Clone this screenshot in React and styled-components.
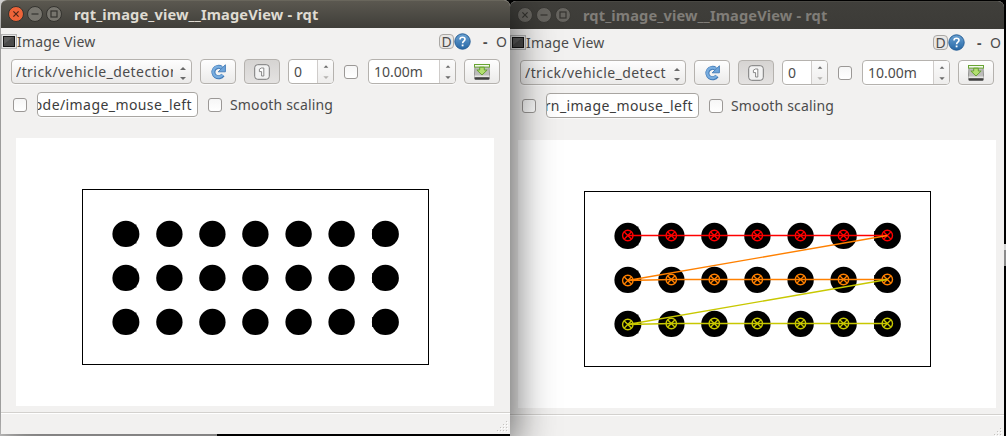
import React from "react";
import styled, { createGlobalStyle } from "styled-components";

const Global = createGlobalStyle`
  body { margin: 0; background: #000; overflow: hidden; }
  * { box-sizing: border-box; }
`;

const Desktop = styled.div`
  position: relative;
  width: 1006px;
  height: 436px;
  overflow: hidden;
  background: #000;
  font-family: "Noto Sans", "Open Sans", sans-serif;
  color: #4c4c4c;
`;

const Backdrop = styled.div`
  position: absolute;
  left: ${(p) => p.$x}px;
  top: ${(p) => p.$y}px;
  width: ${(p) => p.$w}px;
  height: ${(p) => p.$h}px;
  background: ${(p) => p.$bg};
`;

const Frame = styled.section`
  position: absolute;
  left: ${(p) => p.$x}px;
  top: ${(p) => p.$y}px;
  width: ${(p) => p.$w}px;
  height: ${(p) => p.$h}px;
  display: flex;
  flex-direction: column;
  background: #f2f1f0;
  border-radius: 6px 6px 0 0;
  box-shadow: ${(p) => (p.$active ? "0 10px 42px 4px rgba(0,0,0,.62)" : "none")};
`;

const TitleBar = styled.header`
  flex: none;
  height: 28px;
  display: flex;
  align-items: center;
  padding: 0 0 1px 7px;
  border-radius: 6px 6px 0 0;
  background: ${(p) => (p.$active ? "linear-gradient(#5b5850, #3f3e39)" : "linear-gradient(#403f3b, #3c3b37)")};
  border-top: 1px solid ${(p) => (p.$active ? "#69665c" : "#494843")};
`;

const WindowButtons = styled.div`
  display: flex;
  gap: 3px;
`;

const Title = styled.h1`
  margin: 0 0 0 12px;
  font-size: 14.6px;
  font-weight: 700;
  line-height: 26px;
  letter-spacing: 0.14px;
  white-space: nowrap;
  color: ${(p) => (p.$active ? "#dfdbd2" : "#807d78")};
`;

const Header = styled.div`
  flex: none;
  height: 31px;
  display: flex;
  align-items: center;
  padding: 0 2px 4px 0;
`;

const Text = styled.span`
  font-size: 14px;
  line-height: 20px;
  letter-spacing: ${(p) => p.$track || 0}px;
  white-space: nowrap;
`;

const HeaderActions = styled.div`
  margin-left: auto;
  display: flex;
  align-items: center;
`;

const DockButton = styled.span`
  width: 15px;
  height: 15px;
  border: 1px solid #aaa8a5;
  border-radius: 4px;
  background: #e9e7e5;
  font-size: 14px;
  line-height: 14px;
  text-align: center;
`;

const Dash = styled(Text)`
  width: 6px;
  margin-left: 12px;
  font-weight: 700;
`;

const Close = styled(Text)`
  width: 12px;
  margin-left: 7px;
`;

const Toolbar = styled.div`
  flex: none;
  height: 25px;
  display: flex;
  align-items: center;
  gap: 8px;
  padding: 0 10px;
`;

const Control = styled.div`
  height: 25px;
  border: 1px solid #b5b2ae;
  border-radius: 4px;
  box-shadow: 0 1px 0 #fafafa;
`;

const Combo = styled(Control)`
  flex: 1;
  min-width: 0;
  display: flex;
  align-items: center;
  gap: 7px;
  padding: 0 5px 0 4px;
  background: linear-gradient(#fefefe, #ebeae9);
`;

const ComboMark = styled.div`
  padding-top: 4px;
`;

const Clip = styled.div`
  flex: 1;
  min-width: 0;
  overflow: hidden;
  display: flex;
  justify-content: ${(p) => (p.$end ? "flex-end" : "flex-start")};
`;

const ToolButton = styled(Control)`
  width: 36px;
  display: flex;
  align-items: center;
  justify-content: center;
  background: ${(p) => (p.$pressed ? "linear-gradient(#d6d4d2, #e4e2e1)" : "linear-gradient(#fefefe, #ebeae9)")};
`;

const Spin = styled(Control)`
  width: ${(p) => p.$w}px;
  display: flex;
  align-items: center;
  padding-left: 5px;
  background: #fff;
`;

const Stepper = styled.div`
  width: 16px;
  height: 23px;
  margin-left: auto;
  display: flex;
  align-items: center;
  justify-content: center;
  border-left: 1px solid #cfccca;
  border-radius: 0 3px 3px 0;
  background: linear-gradient(#fbfbfb, #eeedec);
`;

const CheckBox = styled.div`
  flex: none;
  width: 14px;
  height: 14px;
  margin: ${(p) => p.$m || "0 2px"};
  border: 1px solid #9b9896;
  border-radius: 3px;
  background: linear-gradient(#f6f6f6, #fff);
`;

const OptionRow = styled.div`
  flex: none;
  height: 25px;
  margin-top: 8px;
  display: flex;
  align-items: center;
  padding-left: 12px;
`;

const TopicInput = styled(Control)`
  width: ${(p) => p.$w}px;
  display: flex;
  align-items: center;
  padding-right: 5px;
  border-color: #a8a5a1;
  background: #fff;
  color: #3c3c3c;
`;

const Viewport = styled.div`
  flex: none;
  width: 478px;
  height: 268px;
  margin: ${(p) => p.$top}px 0 0 ${(p) => p.$left}px;
  background: #fff;
`;

const StatusBar = styled.footer`
  flex: 1;
  margin-top: 6px;
  display: flex;
  align-items: flex-end;
  justify-content: flex-end;
  padding: 0 1px 1px 0;
  border-top: 1px solid #d3d1ce;
  box-shadow: inset 0 1px 0 #fff;
`;

const Svg = styled.svg`
  display: block;
  flex: none;
`;

const WindowButton = ({ kind, active }) => {
  const close = kind === "close" && active;
  return (
    <Svg width="16" height="16" viewBox="0 0 16 16">
      <circle cx="8" cy="8" r="7.5" fill={close ? "#ee6439" : active ? "#77756e" : "#66645f"} stroke={active ? "#34332f" : "#3a3935"} />
      <g fill="none" stroke={close ? "#4d2517" : "#34332f"} strokeWidth="1.2">
        {kind === "close" && <path d="M5.4 5.4l5.2 5.2M10.6 5.4l-5.2 5.2" />}
        {kind === "min" && <path d="M4.5 8h7" />}
        {kind === "max" && <rect x="5" y="5" width="6" height="6" />}
      </g>
    </Svg>
  );
};

const ScreenIcon = () => (
  <Svg width="16" height="15" viewBox="0 0 16 15">
    <rect x=".5" y=".5" width="15" height="14" fill="#e4e4e4" stroke="#b5b5b5" />
    <rect x="2.5" y="2.5" width="11" height="10" fill="#4b4b4b" stroke="#161616" />
    <path d="M3 3h9L3 10z" fill="#6a6a6a" opacity=".6" />
  </Svg>
);

const HelpIcon = () => (
  <Svg width="17" height="17" viewBox="0 0 17 17">
    <defs>
      <linearGradient id="help" x1="0" y1="0" x2="0" y2="1">
        <stop offset="0" stopColor="#6ba2d3" />
        <stop offset="1" stopColor="#2667a5" />
      </linearGradient>
    </defs>
    <circle cx="8.5" cy="8.5" r="7.7" fill="url(#help)" stroke="#275f96" />
    <path d="M6 6.4C6 3.5 11 3.6 11 6.3c0 1.9-2.4 1.8-2.4 4" fill="none" stroke="#fff" strokeWidth="1.6" />
    <rect x="7.7" y="11.5" width="1.8" height="1.8" fill="#fff" />
  </Svg>
);

const RefreshIcon = () => (
  <Svg width="16" height="16" viewBox="0 0 16 16">
    <path d="M11.6 3.8A5.2 5.2 0 1 0 12.9 11" fill="none" stroke="#4179b6" strokeWidth="4" />
    <path d="M15.4 .8v7H8.2z" fill="#6ea5db" stroke="#4179b6" strokeWidth=".9" />
    <path d="M11.6 3.8A5.2 5.2 0 1 0 12.6 10.9" fill="none" stroke="#78addf" strokeWidth="2.4" />
  </Svg>
);

const OneIcon = () => (
  <Svg width="16" height="16" viewBox="0 0 16 16">
    <rect x=".7" y=".7" width="14.6" height="14.6" rx="3" fill="#f2f2f2" stroke="#7a7a7a" />
    <path d="M5.4 5.2L7.4 4h2.4v8H7.6V7.6H5.4z" fill="#fff" stroke="#7c7c7c" strokeWidth=".9" />
  </Svg>
);

const SaveIcon = () => (
  <Svg width="16" height="16" viewBox="0 0 16 16">
    <path d="M1 2h14l.6 9v3H.4v-3z" fill="#bdbdbb" stroke="#858583" strokeWidth=".8" />
    <rect x=".5" y="11.5" width="15" height="2" fill="#e6e6e4" />
    <rect x=".5" y="13.2" width="15" height="2.5" rx="1" fill="#3f3f3f" />
    <rect x=".5" y=".5" width="15" height="2.6" fill="#f4faec" stroke="#68a433" />
    <path d="M5.7 3.2h4.6V6h2.9L8 11 2.8 6h2.9z" fill="#b2df70" stroke="#609c2a" strokeWidth=".9" />
  </Svg>
);

const ComboArrows = () => (
  <Svg width="6" height="13" viewBox="0 0 6 13">
    <path d="M0 3L3 0l3 3z" fill="#6a6a6a" />
    <path d="M0 10l3 3 3-3z" fill="#6a6a6a" />
  </Svg>
);

const SpinArrows = ({ dim }) => (
  <Svg width="6" height="14" viewBox="0 0 6 14">
    <path d="M.7 2.8L3 .2l2.3 2.6z" fill="#6a6a6a" />
    <path d="M.3 11.2L3 14l2.7-2.8z" fill={dim ? "#b5b3b1" : "#6a6a6a"} />
  </Svg>
);

const Grip = () => (
  <Svg width="12" height="12" viewBox="0 0 12 12">
    {[[9, 0], [6, 3], [9, 3], [3, 6], [6, 6], [9, 6], [0, 9], [3, 9], [6, 9], [9, 9]].map(([x, y]) => (
      <g key={`${x}-${y}`}>
        <rect x={x + 1} y={y + 1} width="1" height="1" fill="#fff" />
        <rect x={x} y={y} width="1" height="1" fill="#c5c3c0" />
      </g>
    ))}
  </Svg>
);

const columns = [44, 87.5, 130.5, 173.5, 216.7, 259.7, 303.5];
const rows = [
  { y: 96, color: "#ff0000" },
  { y: 140, color: "#ff8000" },
  { y: 184, color: "#c8c800" },
];

const Pattern = ({ detected }) => (
  <Svg width="478" height="268" viewBox="0 0 478 268">
    <rect x="66.5" y="51.5" width="346" height="175" fill="#fff" stroke="#000" />
    {rows.map((r) =>
      columns.map((x, i) => (
        <ellipse key={`${r.y}-${x}`} cx={x + 65.9} cy={r.y - 0.1} rx={i === 0 || i === 6 ? 13.5 : 13.2} ry="13.1" />
      ))
    )}
    {rows.map((r) => (
      <g key={r.y}>
        <rect x="119" y={r.y - 9.4} width="1.4" height="2" />
        <rect x="119" y={r.y + 7.4} width="1.4" height="2" />
        <rect x="356.2" y={r.y - 5} width="1.2" height="10" />
      </g>
    ))}
    {detected &&
      rows.map((r, n) => (
        <g key={r.y} fill="none" stroke={r.color} strokeWidth="1.4">
          <path
            d={`${n ? `M369.5 ${rows[n - 1].y - 0.5}L109.5 ${r.y + 0.5}` : `M109.5 ${r.y - 0.5}`}L153.5 ${r.y - 0.5}H369.5`}
          />
          {columns.map((x, i) => {
            const cx = x + 65.8;
            const cy = r.y + (i === 0 && n ? 0.5 : -0.5);
            return (
              <g key={x}>
                <circle cx={cx} cy={cy} r="5.2" />
                <path d={`M${cx - 3.5} ${cy - 3.5}l7 7M${cx + 3.5} ${cy - 3.5}l-7 7`} />
              </g>
            );
          })}
        </g>
      ))}
  </Svg>
);

const RqtWindow = ({ x, y, w, h, active, topic, output, outputWidth, viewTop, viewLeft, detected }) => (
  <Frame $x={x} $y={y} $w={w} $h={h} $active={active}>
    <TitleBar $active={active}>
      <WindowButtons>
        <WindowButton kind="close" active={active} />
        <WindowButton kind="min" active={active} />
        <WindowButton kind="max" active={active} />
      </WindowButtons>
      <Title $active={active}>rqt_image_view__ImageView - rqt</Title>
    </TitleBar>
    <Header>
      <ScreenIcon />
      <Text $track={0.2}>Image View</Text>
      <HeaderActions>
        <DockButton>D</DockButton>
        <HelpIcon />
        <Dash>-</Dash>
        <Close>O</Close>
      </HeaderActions>
    </Header>
    <Toolbar>
      <Combo>
        <Clip><Text $track={0.43}>{topic}</Text></Clip>
        <ComboMark><ComboArrows /></ComboMark>
      </Combo>
      <ToolButton><RefreshIcon /></ToolButton>
      <ToolButton $pressed><OneIcon /></ToolButton>
      <Spin $w={46}><Text>0</Text><Stepper><SpinArrows dim /></Stepper></Spin>
      <CheckBox />
      <Spin $w={88}><Text>10.00m</Text><Stepper><SpinArrows /></Stepper></Spin>
      <ToolButton><SaveIcon /></ToolButton>
    </Toolbar>
    <OptionRow>
      <CheckBox $m="0 10px 0 0" />
      <TopicInput $w={outputWidth}><Clip $end><Text $track={0.42}>{output}</Text></Clip></TopicInput>
      <CheckBox $m="0 8px 0 10px" />
      <Text $track={0.16}>Smooth scaling</Text>
    </OptionRow>
    <Viewport $top={viewTop} $left={viewLeft}><Pattern detected={detected} /></Viewport>
    <StatusBar><Grip /></StatusBar>
  </Frame>
);

export default function App() {
  return (
    <>
      <Global />
      <Desktop>
        <Backdrop $x={0} $y={0} $w={217} $h={436} $bg="#f2f1f0" />
        <Backdrop $x={1004} $y={244} $w={2} $h={6} $bg="#d5d5d5" />
        <Backdrop $x={1004} $y={250} $w={2} $h={16} $bg="#8b8b8b" />
        <RqtWindow x={510} y={1} w={494} h={440} topic="/trick/vehicle_detect" output="rn_image_mouse_left" outputWidth={153} viewTop={22} viewLeft={8} detected />
        <RqtWindow x={1} y={0} w={509} h={434} active topic="/trick/vehicle_detection" output="ode/image_mouse_left" outputWidth={161} viewTop={21} viewLeft={15} />
      </Desktop>
    </>
  );
}
